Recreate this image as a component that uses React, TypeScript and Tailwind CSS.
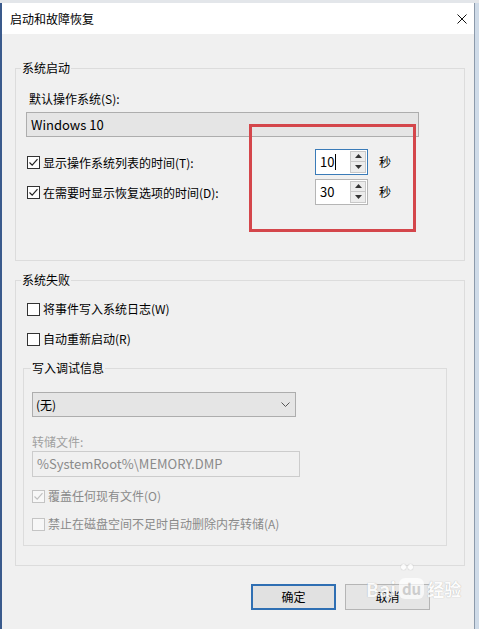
import type { ReactNode } from "react"

const font = { fontFamily: '"Noto Sans CJK SC", "Noto Sans", sans-serif' }

const Check = ({ checked, disabled }: { checked?: boolean; disabled?: boolean }) => (
  <div
    className={`w-[13px] h-[13px] shrink-0 border flex items-center justify-center ${
      disabled ? "border-[#c4c4c4] bg-[#f7f7f7]" : "border-[#333] bg-white"
    }`}
  >
    {checked && (
      <svg width="11" height="11" viewBox="0 0 11 11">
        <polyline
          points="1.5,5.5 4.2,8.2 9.5,2.2"
          fill="none"
          stroke={disabled ? "#c0c0c0" : "#222"}
          strokeWidth="1.2"
        />
      </svg>
    )}
  </div>
)

const CheckRow = ({
  label,
  checked,
  disabled,
  className = "",
}: {
  label: string
  checked?: boolean
  disabled?: boolean
  className?: string
}) => (
  <div className={`flex items-center h-[16px] ${className}`}>
    <Check checked={checked} disabled={disabled} />
    <span className={`ml-[3px] text-[12px] leading-[16px] ${disabled ? "text-[#8a8a8a]" : "text-black"}`}>{label}</span>
  </div>
)

const Spin = ({ value, focused }: { value: string; focused?: boolean }) => (
  <div
    className={`w-[53px] h-[26px] flex bg-white border ${focused ? "border-[#3a7bb8]" : "border-[#b5b5b5]"}`}
  >
    <div className="flex-1 flex items-center pl-[4px] text-[13px]">
      {value}
      {focused && <span className="w-px h-[16px] bg-black ml-px" />}
    </div>
    <div className="w-[16px] my-[1px] mr-[1px] flex flex-col border border-[#c8c8c8] bg-[#ececec]">
      <div className="flex-1 flex items-center justify-center border-b border-[#c8c8c8]">
        <svg width="7" height="4" viewBox="0 0 7 4">
          <polygon points="0,4 7,4 3.5,0" fill="#333" />
        </svg>
      </div>
      <div className="flex-1 flex items-center justify-center">
        <svg width="7" height="4" viewBox="0 0 7 4">
          <polygon points="0,0 7,0 3.5,4" fill="#333" />
        </svg>
      </div>
    </div>
  </div>
)

const Group = ({
  title,
  className = "",
  legendClass = "ml-[5px]",
  children,
}: {
  title: string
  className?: string
  legendClass?: string
  children: ReactNode
}) => (
  <fieldset className={`border border-[#dcdcdc] min-w-0 ${className}`}>
    <legend className={`px-px text-[12px] leading-[16px] text-black ${legendClass}`}>{title}</legend>
    {children}
  </fieldset>
)

export default function App() {
  return (
    <div className="relative w-[479px] h-[629px] overflow-hidden bg-[#cfdbe8] flex flex-col" style={font}>
      <div className="h-[3px] bg-[#e3e6ea]" />
      <div className="flex flex-1 min-h-0">
        <div className="w-[475px] border-l-2 border-[#3a5a8c] border-r border-r-[#8c9aab] flex flex-col bg-[#f0f0f0]">
          {/* title bar */}
          <div className="h-[31px] bg-white flex items-center justify-between pl-[8px] pr-[7px]">
            <span className="text-[12px] leading-[16px] text-black">启动和故障恢复</span>
            <svg width="10" height="10" viewBox="0 0 10 10">
              <path d="M0.5 0.5 L9.5 9.5 M9.5 0.5 L0.5 9.5" stroke="#111" strokeWidth="1" />
            </svg>
          </div>

          <div className="flex-1 pl-[13px] pr-[9px] pt-[26px] text-[12px] text-black">
            <Group title="系统启动" className="pb-[56px]">
              <div className="mt-[15px] ml-[13px] leading-[16px]">默认操作系统(S):</div>
              <div className="mt-[5px] ml-[10px] w-[393px] h-[25px] bg-[#e5e5e5] border border-[#adadad] flex items-center pl-[4px] text-[13px]">
                Windows 10
              </div>
              <div className="mt-[12px] ml-[11px] flex items-center h-[25px]">
                <div className="w-[288px] pt-[2px]">
                  <CheckRow label="显示操作系统列表的时间(T):" checked />
                </div>
                <Spin value="10" focused />
                <span className="ml-[11px] leading-[16px]">秒</span>
              </div>
              <div className="mt-[5px] ml-[11px] flex items-center h-[25px]">
                <div className="w-[288px] pt-[2px]">
                  <CheckRow label="在需要时显示恢复选项的时间(D):" checked />
                </div>
                <Spin value="30" />
                <span className="ml-[11px] leading-[16px]">秒</span>
              </div>
            </Group>

            <Group title="系统失败" className="mt-[11px] pb-[19px]">
              <CheckRow label="将事件写入系统日志(W)" className="mt-[13px] ml-[11px]" />
              <CheckRow label="自动重新启动(R)" className="mt-[14px] ml-[11px]" />
              <Group title="写入调试信息" legendClass="ml-[7px]" className="mt-[13px] ml-[7px] mr-[17px] pb-[13px]">
                <div className="mt-[16px] ml-[8px] w-[264px] h-[25px] bg-[#e5e5e5] border border-[#adadad] flex items-center justify-between pl-[3px] pr-[5px]">
                  <span className="leading-[16px]">(无)</span>
                  <svg width="9" height="5" viewBox="0 0 9 5">
                    <polyline points="0.5,0.5 4.5,4.5 8.5,0.5" fill="none" stroke="#555" strokeWidth="1" />
                  </svg>
                </div>
                <div className="mt-[17px] ml-[8px] leading-[16px] text-[#a0a0a0]">转储文件:</div>
                <div className="mt-px ml-[8px] w-[268px] h-[26px] border border-[#cccccc] bg-[#f0f0f0] flex items-center pl-[4px] text-[13px] text-[#8a8a8a]">
                  %SystemRoot%\MEMORY.DMP
                </div>
                <CheckRow label="覆盖任何现有文件(O)" checked disabled className="mt-[11px] ml-[8px]" />
                <CheckRow label="禁止在磁盘空间不足时自动删除内存转储(A)" disabled className="mt-[12px] ml-[8px]" />
              </Group>
            </Group>

            <div className="mt-[18px] mr-[35px] flex justify-end gap-[9px]">
              <button className="w-[85px] h-[26px] bg-[#e1e1e1] border-2 border-[#2f6fb3] text-[12px] leading-[16px]">
                确定
              </button>
              <button className="w-[85px] h-[26px] bg-[#e5e5e5] border border-[#b5b5b5] text-[12px] leading-[16px]">
                取消
              </button>
            </div>
          </div>
        </div>
      </div>

      {/* red annotation box */}
      <div className="absolute left-[249px] top-[124px] w-[167px] h-[108px] border-[3px] border-[#d4464b]" />

      {/* watermark */}
      <div className="absolute left-[366px] top-[576px] flex items-end gap-[3px] opacity-80 pointer-events-none">
        <span className="text-[19px] leading-[22px] font-bold text-white" style={{ textShadow: "0 0 1px #9a9a9a" }}>
          Bai
        </span>
        <div className="relative">
          <div className="flex gap-[2px] absolute -top-[12px] left-[2px]">
            <span className="w-[5px] h-[6px] rounded-full bg-white shadow-[0_0_1px_#999]" />
            <span className="w-[5px] h-[6px] rounded-full bg-white shadow-[0_0_1px_#999]" />
          </div>
          <span className="px-[3px] rounded-[6px] bg-white/90 text-[15px] leading-[18px] font-bold text-[#c8c8c8]">du</span>
        </div>
        <span className="text-[17px] leading-[22px] font-bold text-white" style={{ textShadow: "0 0 1px #9a9a9a" }}>
          经验
        </span>
      </div>
    </div>
  )
}
